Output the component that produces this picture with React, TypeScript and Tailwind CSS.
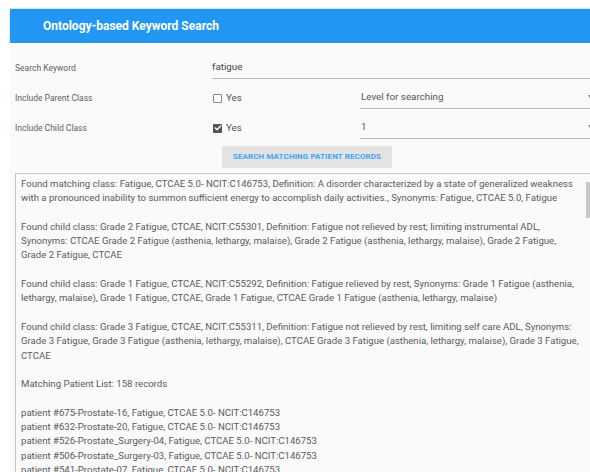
import { Check } from "lucide-react";

const results = [
  "Found matching class: Fatigue, CTCAE 5.0- NCIT:C146753, Definition: A disorder characterized by a state of generalized weakness with a pronounced inability to summon sufficient energy to accomplish daily activities., Synonyms: Fatigue, CTCAE 5.0, Fatigue",
  "",
  "Found child class: Grade 2 Fatigue, CTCAE, NCIT:C55301, Definition: Fatigue not relieved by rest; limiting instrumental ADL, Synonyms: CTCAE Grade 2 Fatigue (asthenia, lethargy, malaise), Grade 2 Fatigue (asthenia, lethargy, malaise), Grade 2 Fatigue, Grade 2 Fatigue, CTCAE",
  "",
  "Found child class: Grade 1 Fatigue, CTCAE, NCIT:C55292, Definition: Fatigue relieved by rest, Synonyms: Grade 1 Fatigue (asthenia, lethargy, malaise), Grade 1 Fatigue, CTCAE, Grade 1 Fatigue, CTCAE Grade 1 Fatigue (asthenia, lethargy, malaise)",
  "",
  "Found child class: Grade 3 Fatigue, CTCAE, NCIT:C55311, Definition: Fatigue not relieved by rest, limiting self care ADL, Synonyms: Grade 3 Fatigue, Grade 3 Fatigue (asthenia, lethargy, malaise), CTCAE Grade 3 Fatigue (asthenia, lethargy, malaise), Grade 3 Fatigue, CTCAE",
  "",
  "Matching Patient List: 158 records",
  "",
  "patient #675-Prostate-16, Fatigue, CTCAE 5.0- NCIT:C146753",
  "patient #632-Prostate-20, Fatigue, CTCAE 5.0- NCIT:C146753",
  "patient #526-Prostate_Surgery-04, Fatigue, CTCAE 5.0- NCIT:C146753",
  "patient #506-Prostate_Surgery-03, Fatigue, CTCAE 5.0- NCIT:C146753",
  "patient #541-Prostate-07, Fatigue, CTCAE 5.0- NCIT:C146753",
  "patient #512-Prostate-11, Fatigue, CTCAE 5.0- NCIT:C146753",
];

function Box({ checked }: { checked?: boolean }) {
  if (checked) {
    return (
      <span className="flex h-[9px] w-[9px] items-center justify-center rounded-[1px] bg-[#555]">
        <Check className="h-[8px] w-[8px] text-white" strokeWidth={4} />
      </span>
    );
  }
  return <span className="h-[9px] w-[9px] rounded-[1px] border border-[#8a8a8a] bg-white" />;
}

function SelectField({ value }: { value: string }) {
  return (
    <div className="flex h-[22px] w-[236px] items-center justify-between border-b border-[#bdbdbd] pl-[1px] pr-[2px] text-[9.8px] text-[#555]">
      <span>{value}</span>
      <span className="text-[7px] text-[#666]">▼</span>
    </div>
  );
}

export default function App() {
  return (
    <div className="h-[472px] w-[590px] overflow-hidden bg-white font-['Roboto',sans-serif]">
      <div className="ml-[10px] mt-[8px] w-[600px] border-t border-[#cfe6fb]">
        <header className="flex h-[34px] items-center bg-[#2196f3] pl-[33px] shadow-[0_2px_2px_rgba(0,0,0,0.25)]">
          <h1 className="text-[12px] font-bold text-white">Ontology-based Keyword Search</h1>
        </header>

        <main className="h-[440px] bg-[#fafafa] pl-[5px] pt-[10px]">
          <div className="grid grid-cols-[197px_148px_1fr] text-[#5f5f5f]">
            <div className="flex h-[30px] items-center text-[8.5px]">Search Keyword</div>
            <div className="col-span-2 flex h-[30px] items-center">
              <div className="flex h-[22px] w-full items-center border-b border-[#bdbdbd] text-[9.8px] text-[#444]">
                fatigue
              </div>
            </div>

            <div className="flex h-[30px] items-center text-[8.5px]">Include Parent Class</div>
            <div className="flex h-[30px] items-center gap-[4px] pl-[1px] text-[9.8px] text-[#555]">
              <Box />
              <span>Yes</span>
            </div>
            <div className="flex h-[30px] items-center">
              <SelectField value="Level for searching" />
            </div>

            <div className="flex h-[30px] items-center text-[8.5px]">Include Child Class</div>
            <div className="flex h-[30px] items-center gap-[4px] pl-[1px] text-[9.8px] text-[#555]">
              <Box checked />
              <span>Yes</span>
            </div>
            <div className="flex h-[30px] items-center">
              <SelectField value="1" />
            </div>
          </div>

          <div className="ml-[207px] mt-[3px] flex h-[22px] w-[170px] items-center justify-center bg-[#e3e3e3] text-[8px] font-bold tracking-[0.1px] text-[#42a5f5]">
            SEARCH MATCHING PATIENT RECORDS
          </div>

          <div className="relative mt-[5px] h-[320px] border border-[#c4c4c4] bg-[#fafafa] pl-[5px] pr-[26px] pt-[3px] text-[9.6px] leading-[14.3px] text-[#5a5a5a]">
            {results.map((line, i) => (
              <p key={i} className="min-h-[14.3px]">
                {line}
              </p>
            ))}
            <div className="absolute right-[19px] top-[8px] h-[36px] w-[4px] bg-[#c8c8c8]" />
          </div>
        </main>
      </div>
    </div>
  );
}
